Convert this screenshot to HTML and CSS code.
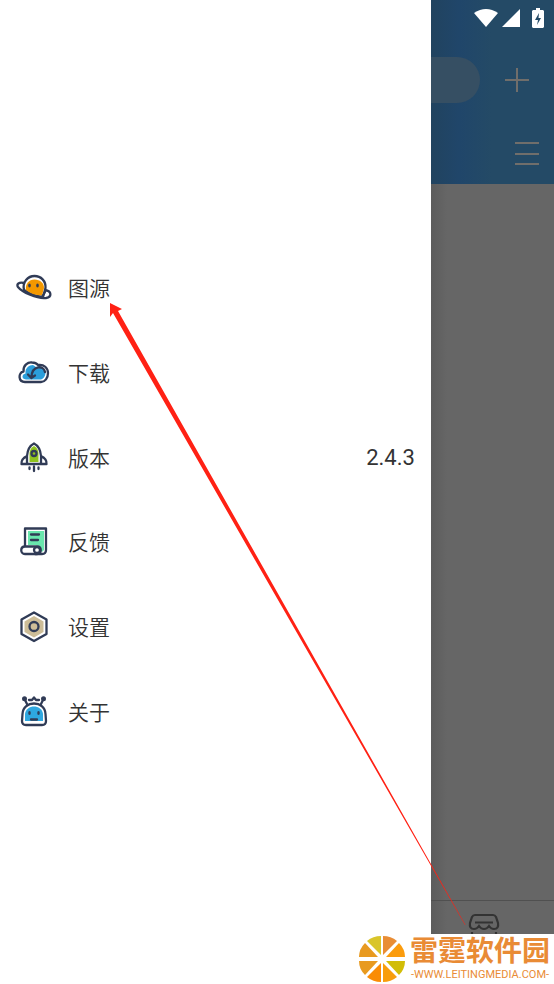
FILE: index.html
```html
<!DOCTYPE html>
<html lang="zh-cn">
<head>
	<meta charset="utf-8">
	<meta name="viewport" content="width=device-width, initial-scale=1.0">
	<title>侧边菜单</title>
	<link rel="stylesheet" href="styles.css">
</head>
<body>

	<div class="screen">
		<nav class="drawer">
			<ul class="menu">
				<li>
					<a class="menuItem" href="#source">
						<svg class="icon" viewBox="0 0 36 36">
							<path class="line" fill="#fff" d="M8 20C6 12 12 6 18.500 6S30 11 29.500 18L27 27Q17 26 8 20Z"/>
							<path fill="#f39800" d="M10 20C9 14 13 9.500 18.500 9.500S28 13 28 18L26 25.500Q16 25 10 20Z"/>
							<path class="line" d="M8 13C3 12 0 14 2 17C6 22 21 29 30 28C36 27 36 21 29 20M26 27L29 22"/>
							<ellipse class="dark" cx="13.500" cy="15.500" rx="1.300" ry="2"/>
							<ellipse class="dark" cx="21.500" cy="15.500" rx="1.300" ry="2"/>
						</svg>
						<span>图源</span>
					</a>
				</li>
				<li>
					<a class="menuItem" href="#download">
						<svg class="icon" viewBox="0 0 36 36">
							<path class="line" fill="#fff" d="M9 27C2 27 2 17.500 7.500 16.500C7 10 12 7 16 7.500Q20 7.500 22 10C28 9 32 13 32 18S29 27 25 27Z"/>
							<path fill="#2b9edb" d="M10 24.500C5 24 6 19 9.500 18.500C9 13 13 10 17 10L20 12C26 10 30 14 29.500 18S27 24.500 24 24.500Z"/>
							<path class="line" d="M29 17C28 10 16 10 15.500 22M12 19.500L15.300 23L19 20.500"/>
						</svg>
						<span>下载</span>
					</a>
				</li>
				<li>
					<a class="menuItem" href="#version">
						<svg class="icon" viewBox="0 0 36 36">
							<path class="line" fill="#fff" d="M18 3.500C13 6 11.500 10 11 16C7 18 5 20 5.500 24H30.500C31 20 29 18 25 16C24.500 10 23 6 18 3.500ZM11 16V24M25 16V24"/>
							<path fill="#8fc31f" d="M13.500 22V13Q14 8 18 6Q22 8 22.500 13V22Z"/>
							<circle class="line" cx="18" cy="13.500" r="2.500"/>
							<path class="line" d="M13.500 27.500V29M18 26.500V31M22.500 27.500V29"/>
						</svg>
						<span>版本</span>
					</a>
					<output class="version">2.4.3</output>
				</li>
				<li>
					<a class="menuItem" href="#feedback">
						<svg class="icon" viewBox="0 0 36 36">
							<path class="line" fill="#fff" d="M9 22V4.500H30V26Q30 30 26 30H19"/>
							<path fill="#69e6ad" d="M12 7H28V26L26 28L21 21H12Z"/>
							<path class="line" d="M15 10.500H23M15 16H22"/>
							<path class="line" fill="#fff" d="M9 22.500H21C26 22.500 26 30 21 30H9C4 30 4 22.500 9 22.500Z"/>
							<circle class="line" cx="21" cy="26" r="3"/>
						</svg>
						<span>反馈</span>
					</a>
				</li>
				<li>
					<a class="menuItem" href="#settings">
						<svg class="icon" viewBox="0 0 36 36">
							<path class="line" fill="#fff" d="M18 3.500L30.500 10.500V25L18 32L5.500 25V10.500Z"/>
							<path fill="#cdbd98" d="M18 7L27.500 12.500V23L18 28.500L8.500 23V12.500Z"/>
							<circle class="line" cx="18" cy="17.500" r="4.500"/>
						</svg>
						<span>设置</span>
					</a>
				</li>
				<li>
					<a class="menuItem" href="#about">
						<svg class="icon" viewBox="0 0 36 36">
							<path class="line" fill="#fff" d="M6.500 20C7 6 29 6 29.500 20L30 27Q30 31 26 31H10Q6 31 6 27Z"/>
							<path fill="#2ea7e0" d="M9 20C10 10 26 10 27 20V27H9Z"/>
							<path class="line" d="M8.500 5L11.500 11M27.500 5L24.500 11M13 6L16 6L18 3.500L20 6H23"/>
							<circle class="dark" cx="8.500" cy="4.700" r="2.500"/>
							<circle class="dark" cx="27.500" cy="4.700" r="2.500"/>
							<ellipse class="dark" cx="13.500" cy="19" rx="1.300" ry="2"/>
							<ellipse class="dark" cx="22.500" cy="19" rx="1.300" ry="2"/>
							<path class="line" d="M15 25.500H21"/>
						</svg>
						<span>关于</span>
					</a>
				</li>
			</ul>
		</nav>

		<main class="page">
			<header class="head">
				<div class="status">
					<svg class="wifi" viewBox="0 0 24 20"><path d="M0 5Q12-3 24 5L12 19Z"/></svg>
					<svg class="signal" viewBox="0 0 18 18"><path d="M18 0V18H0Z"/></svg>
					<svg class="battery" viewBox="0 0 12 20"><path fill-rule="evenodd" d="M4 0H8V2H11L12 3V19L11 20H1L0 19V3L1 2H4ZM7 5L3 12H6L5 17L9 10H6.500Z"/></svg>
				</div>
				<div class="searchBar">
					<input class="search" type="search" aria-label="搜索">
					<button class="btn" aria-label="添加">
						<svg viewBox="0 0 26 26"><path d="M13 1V25M1 13H25"/></svg>
					</button>
				</div>
				<div class="tools">
					<button class="btn" aria-label="列表">
						<svg viewBox="0 0 26 26"><path d="M1 3H25M1 14H25M1 24H25"/></svg>
					</button>
				</div>
			</header>
			<footer class="tabBar">
				<a href="#store" aria-label="商店">
					<svg class="store" viewBox="0 0 32 21"><path d="M7 2H25Q27 2 28 4L30 10Q31 16 26 16Q23 16 21 13Q19 16 16 16T11 13Q9 16 6 16Q1 16 2 10L4 4Q5 2 7 2ZM7 9.500H25M4 19V21M28 19V21"/></svg>
				</a>
			</footer>
		</main>

		<svg class="pointer" viewBox="0 0 554 934" preserveAspectRatio="none">
			<path d="M110 303L122 309L118 311L465.500 925H465L113 313L110 317Z"/>
		</svg>
	</div>

	<footer class="brand">
		<svg class="orange" viewBox="0 0 48 48">
			<path fill="#e98d35" d="M25 20V1Q33 1 39 6Z"/>
			<path fill="#fb9c0d" d="M28 22L41 8Q47 14 47 22Z"/>
			<path fill="#d2bd07" d="M28 26H47Q47 34 41 40Z"/>
			<path fill="#f89d0c" d="M25 28L39 42Q33 47 25 47Z"/>
			<path fill="#fa8c05" d="M23 28V47Q15 47 9 42Z"/>
			<path fill="#e89a20" d="M20 26L7 40Q1 34 1 26Z"/>
			<path fill="#e89a20" d="M20 22H1Q1 14 7 8Z"/>
			<path fill="#d9c52a" d="M23 20L9 6Q15 1 23 1Z"/>
		</svg>
		<div class="brandText">
			<strong>雷霆软件园</strong>
			<small>-WWW.LEITINGMEDIA.COM-</small>
		</div>
	</footer>

</body>
</html>
```
FILE: styles.css
```css
*{
	box-sizing: border-box;
}
body{
	display: flex;
	flex-direction: column;
	min-height: 100vh;
	margin: 0;
	background: #fff;
	color: #333;
	font-family: Roboto, "Noto Sans CJK SC", sans-serif;
}
a{
	color: inherit;
	text-decoration: none;
}
.screen{
	position: relative;
	display: flex;
	flex: 1;
}
.drawer{
	flex: 7;
	padding-top: 246px;
}
.menu{
	display: grid;
	grid-auto-rows: 1fr;
	height: 508px;
	margin: 0;
	padding: 0 16px;
	list-style: none;
	font-size: 21px;
	font-weight: 350;
}
.menu li{
	display: flex;
	align-items: center;
	justify-content: space-between;
}
.menuItem{
	display: flex;
	align-items: center;
	gap: 16px;
}
.menuItem span{
	padding-bottom: 2px;
}
.icon{
	width: 36px;
	height: 36px;
	fill: none;
}
.icon .line{
	stroke: #303b56;
	stroke-width: 2.3;
	stroke-linecap: round;
	stroke-linejoin: round;
}
.icon .dark{
	fill: #303b56;
}
.version{
	font-size: 22px;
	font-weight: 400;
}

.page{
	display: flex;
	flex: 2;
	flex-direction: column;
	justify-content: space-between;
	min-width: 0;
	background: linear-gradient(to right, #5c5c5c, #666 16px);
}
.head{
	height: 184px;
	background: linear-gradient(to right, #21435f, #20466a 28px, #244a66 60px);
}
.status{
	display: flex;
	align-items: center;
	justify-content: flex-end;
	height: 36px;
	padding-right: 10px;
	fill: #fff;
}
.wifi{
	width: 24px;
	height: 20px;
	margin-right: 4px;
}
.signal{
	width: 18px;
	height: 18px;
	margin-right: 12px;
}
.battery{
	width: 12px;
	height: 20px;
}
.searchBar{
	display: flex;
	align-items: center;
	justify-content: space-between;
	height: 88px;
	padding-right: 24px;
}
.search{
	width: 49px;
	height: 46px;
	padding: 0;
	border: 0;
	border-radius: 0 23px 23px 0;
	background: #364f63;
}
.btn{
	width: 26px;
	height: 26px;
	padding: 0;
	border: 0;
	background: none;
}
.btn svg{
	display: block;
	fill: none;
	stroke: #706e6b;
	stroke-width: 2;
}
.tools{
	display: flex;
	justify-content: flex-end;
	padding: 16px 14px 0;
}
.tabBar{
	display: flex;
	height: 34px;
	padding: 12px 37px 0;
	border-top: 1px solid #505050;
}
.store{
	display: block;
	width: 32px;
	height: 21px;
	fill: none;
	stroke: #333;
	stroke-width: 2.2;
}
.pointer{
	position: absolute;
	left: 0;
	top: 0;
	width: 100%;
	height: 100%;
	fill: #ff2114;
	pointer-events: none;
}

.brand{
	display: flex;
	align-items: center;
	justify-content: flex-end;
	gap: 4px;
	height: 50px;
	padding-right: 4px;
	color: #e98b35;
}
.orange{
	width: 48px;
	height: 48px;
}
.brandText{
	display: flex;
	flex-direction: column;
	align-items: center;
}
.brandText strong{
	font-size: 28px;
	font-weight: 700;
	line-height: 32px;
}
.brandText small{
	font-size: 11px;
	line-height: 14px;
}
```
